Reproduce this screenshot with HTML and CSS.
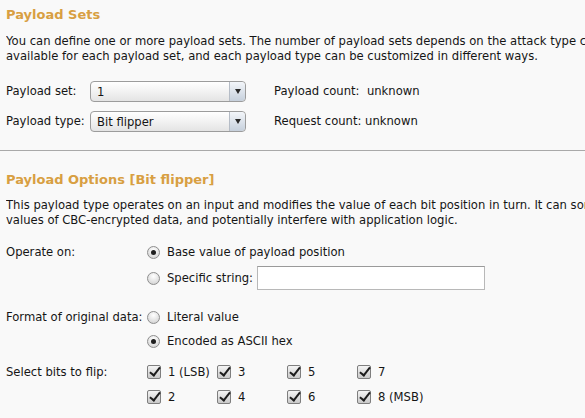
FILE: index.html
```html
<!DOCTYPE html>
<html>
<head>
<meta charset="utf-8">
<link rel="stylesheet" href="styles.css">
</head>
<body>
<section class="sec sec-sets">
  <h2 class="title">Payload Sets</h2>
  <p class="desc">You can define one or more payload sets. The number of payload sets depends on the attack type chosen in the Positions tab. Various payload types are<br>available for each payload set, and each payload type can be customized in different ways.</p>
  <div class="sets-grid">
    <span class="lbl">Payload set:</span>
    <div class="select"><span class="sel-text">1</span><span class="sel-arrow"></span></div>
    <span class="info">Payload count:&nbsp; unknown</span>
    <span class="lbl">Payload type:</span>
    <div class="select"><span class="sel-text">Bit flipper</span><span class="sel-arrow"></span></div>
    <span class="info">Request count:&nbsp;unknown</span>
  </div>
</section>
<hr class="sep">
<section class="sec sec-opts">
  <h2 class="title">Payload Options [Bit flipper]</h2>
  <p class="desc">This payload type operates on an input and modifies the value of each bit position in turn. It can sometimes be used to manipulate the<br>values of CBC-encrypted data, and potentially interfere with application logic.</p>
  <div class="opt-grid">
    <span class="lbl">Operate on:</span>
    <div class="choices first">
      <label class="choice"><span class="radio on"></span>Base value of payload position</label>
      <label class="choice"><span class="radio"></span>Specific string:<span class="textbox"></span></label>
    </div>
    <span class="lbl">Format of original data:</span>
    <div class="choices">
      <label class="choice"><span class="radio"></span>Literal value</label>
      <label class="choice"><span class="radio on"></span>Encoded as ASCII hex</label>
    </div>
    <span class="lbl lbl-bits">Select bits to flip:</span>
    <div class="bits">
      <label class="bit"><span class="check"></span>1 (LSB)</label>
      <label class="bit"><span class="check"></span>3</label>
      <label class="bit"><span class="check"></span>5</label>
      <label class="bit"><span class="check"></span>7</label>
      <label class="bit"><span class="check"></span>2</label>
      <label class="bit"><span class="check"></span>4</label>
      <label class="bit"><span class="check"></span>6</label>
      <label class="bit"><span class="check"></span>8 (MSB)</label>
    </div>
  </div>
</section>
</body>
</html>
```
FILE: styles.css
```css
html, body {
  margin: 0;
  padding: 0;
  background: #f9f9f9;
  width: 585px;
  height: 418px;
  overflow: hidden;
}
body {
  font-family: "DejaVu Sans", sans-serif;
  font-size: 11.6px;
  color: #151515;
}
.sec {
  padding-left: 6px;
}
.title {
  margin: 0;
  font-size: 13px;
  font-weight: bold;
  color: #d89f42;
  line-height: 18px;
}
.sec-sets .title { padding-top: 6px; }
.sec-opts .title { padding-top: 20px; }
.desc {
  margin: 10px 0 0 0;
  line-height: 15px;
  white-space: nowrap;
  overflow: hidden;
}
.sec-opts .desc { margin-top: 9px; }
.sets-grid {
  display: grid;
  grid-template-columns: 84px 156px auto;
  row-gap: 9px;
  align-items: center;
  margin-top: 17px;
}
.lbl, .info {
  line-height: 21px;
  white-space: nowrap;
}
.info { margin-left: 28px; }
.select {
  height: 19px;
  border: 1px solid #9c9c9c;
  border-radius: 4px;
  background: linear-gradient(#ffffff, #f2f2f2 50%, #e4e4e4);
  display: flex;
  align-items: center;
}
.sel-text {
  flex: 1;
  padding-left: 6px;
}
.sel-arrow {
  width: 15px;
  height: 19px;
  border-left: 1px solid #b5bcc6;
  border-radius: 0 4px 4px 0;
  background: linear-gradient(#f3f6fa, #c6d0dc);
  display: flex;
  align-items: center;
  justify-content: center;
}
.sel-arrow::after {
  content: "";
  border-left: 3px solid transparent;
  border-right: 3px solid transparent;
  border-top: 5px solid #2a2a2a;
}
.sep {
  margin: 18px 0 0 0;
  border: 0;
  border-top: 1px solid #a9a9a9;
  height: 0;
}
.opt-grid {
  display: grid;
  grid-template-columns: 141px auto;
  row-gap: 15px;
  margin-top: 12px;
}
.opt-grid .lbl { line-height: 24px; }
.opt-grid .lbl-bits { line-height: 14px; margin-top: -3px; }
.choices {
  display: flex;
  flex-direction: column;
}
.choices.first { gap: 2px; }
.choice {
  display: flex;
  align-items: center;
  height: 24px;
}
.radio {
  width: 13px;
  height: 13px;
  border-radius: 50%;
  border: 1px solid #8e8e8e;
  box-sizing: border-box;
  background: radial-gradient(circle at 50% 30%, #ffffff, #dcdcdc 70%, #c8c8c8);
  margin-right: 7px;
  display: flex;
  align-items: center;
  justify-content: center;
}
.radio.on::after {
  content: "";
  width: 5px;
  height: 5px;
  border-radius: 50%;
  background: #1e1e1e;
}
.textbox {
  width: 228px;
  height: 24px;
  margin-left: 4px;
  border: 1px solid #b8b8b8;
  border-top-color: #9a9a9a;
  background: #ffffff;
  box-sizing: border-box;
}
.bits {
  display: grid;
  grid-template-columns: repeat(4, 70px);
  row-gap: 11px;
  margin-top: -3px;
}
.bit {
  display: flex;
  align-items: center;
  height: 14px;
}
.check {
  width: 14px;
  height: 14px;
  box-sizing: border-box;
  border: 1px solid #7e7e7e;
  border-radius: 2px;
  background: linear-gradient(#f4f4f4, #c9c9c9);
  margin-right: 7px;
  position: relative;
}
.check::after {
  content: "";
  position: absolute;
  left: 4px;
  top: -1px;
  width: 4px;
  height: 9px;
  border-right: 2px solid #1c1c1c;
  border-bottom: 2px solid #1c1c1c;
  transform: rotate(38deg);
}
```
